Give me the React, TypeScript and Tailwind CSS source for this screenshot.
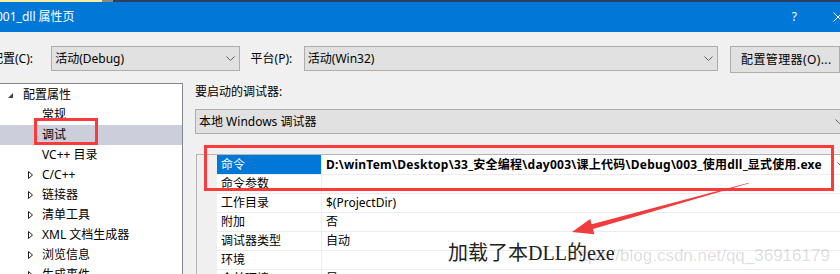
import React from "react";

type TreeItem = { label: string; level: 0 | 1; expanded?: boolean; collapsed?: boolean; selected?: boolean };
type GridRow = { name: string; value: string; bold?: boolean; selected?: boolean };

const tree: TreeItem[] = [
  { label: "配置属性", level: 0, expanded: true },
  { label: "常规", level: 1 },
  { label: "调试", level: 1, selected: true },
  { label: "VC++ 目录", level: 1 },
  { label: "C/C++", level: 1, collapsed: true },
  { label: "链接器", level: 1, collapsed: true },
  { label: "清单工具", level: 1, collapsed: true },
  { label: "XML 文档生成器", level: 1, collapsed: true },
  { label: "浏览信息", level: 1, collapsed: true },
  { label: "生成事件", level: 1, collapsed: true },
];

const rows: GridRow[] = [
  {
    name: "命令",
    value: "D:\\winTem\\Desktop\\33_安全编程\\day003\\课上代码\\Debug\\003_使用dll_显式使用.exe",
    bold: true,
    selected: true,
  },
  { name: "命令参数", value: "" },
  { name: "工作目录", value: "$(ProjectDir)" },
  { name: "附加", value: "否" },
  { name: "调试器类型", value: "自动" },
  { name: "环境", value: "" },
  { name: "合并环境", value: "是" },
];

function Chevron() {
  return (
    <svg width="9" height="5" viewBox="0 0 9 5" className="shrink-0">
      <path d="M0.5 0.5 L4.5 4.5 L8.5 0.5" fill="none" stroke="#606060" strokeWidth="1" />
    </svg>
  );
}

function Combo({ text, width }: { text: string; width: string }) {
  return (
    <div className={`${width} h-[25px] flex items-center border border-[#adadad] bg-[#e1e1e1] pl-[3px] pr-[4px]`}>
      <span className="whitespace-nowrap">{text}</span>
      <span className="ml-auto">
        <Chevron />
      </span>
    </div>
  );
}

export default function App() {
  return (
    <div className="relative w-[840px] h-[274px] overflow-hidden bg-[#f0f0f0] text-[12px] leading-[16px] text-black font-['Noto_Sans','Noto_Sans_CJK_SC',sans-serif]">
      {/* strip of the window behind */}
      <div className="flex h-[2px]">
        <div className="w-[102px] bg-[#f9eda2]" />
        <div className="w-[11px] bg-[#8d8a78]" />
        <div className="flex-1 bg-[#2b3f63]" />
      </div>

      {/* title bar */}
      <div className="flex items-center h-[30px] bg-[#0078d7] text-white">
        <span className="ml-[-4px] whitespace-nowrap">001_dll 属性页</span>
        <span className="ml-auto">?</span>
        <svg width="10" height="10" viewBox="0 0 10 10" className="ml-[36px] mr-[-3px] shrink-0">
          <path d="M0.5 0.5 L9.5 9.5 M9.5 0.5 L0.5 9.5" stroke="white" strokeWidth="1" />
        </svg>
      </div>

      {/* configuration row */}
      <div className="flex items-start mt-[14px] whitespace-nowrap">
        <span className="ml-[-9px] w-[61px] h-[25px] flex items-center">配置(C):</span>
        <Combo text="活动(Debug)" width="w-[191px]" />
        <span className="ml-[11px] w-[54px] h-[25px] flex items-center">平台(P):</span>
        <Combo text="活动(Win32)" width="w-[420px]" />
        <div className="ml-[12px] h-[27px] w-[110px] shrink-0 flex items-center border border-[#adadad] bg-[#e1e1e1] pl-[10px] tracking-[0.4px]">
          配置管理器(O)...
        </div>
      </div>

      <div className="flex mt-[10px]">
        {/* tree */}
        <div className="w-[183px] h-[200px] shrink-0 bg-white border-t border-r border-[#828790] pt-[1px]">
          {tree.map((item) => (
            <div
              key={item.label}
              className={`flex items-center h-[20px] whitespace-nowrap ${item.selected ? "bg-[#cccedb]" : ""} ${
                item.level === 0 ? "pl-[8px]" : "pl-[28px]"
              }`}
            >
              {item.level === 0 ? (
                <span className="w-[15px] flex items-center">
                  <svg width="5" height="5" viewBox="0 0 5 5">
                    <polygon points="5,0 5,5 0,5" fill="#404040" />
                  </svg>
                </span>
              ) : (
                <span className="w-[14px] flex items-center">
                  {item.collapsed && (
                    <svg width="5" height="8" viewBox="0 0 5 8">
                      <polygon points="0.5,0.5 4.5,4 0.5,7.5" fill="none" stroke="#1e1e1e" strokeWidth="1" />
                    </svg>
                  )}
                </span>
              )}
              <span>{item.label}</span>
            </div>
          ))}
        </div>

        {/* debugging page */}
        <div className="pl-[12px] pt-[1px] whitespace-nowrap">
          <div>要启动的调试器:</div>
          <div className="mt-[9px]">
            <Combo text="本地 Windows 调试器" width="w-[654px]" />
          </div>

          <div className="mt-[20px] ml-[1px] flex w-[660px] h-[200px] border-t border-l border-[#b4b4b4] bg-white">
            <div className="w-[20px] shrink-0 bg-[#f0f0f0]" />
            <div className="flex-1">
              {rows.map((row) => (
                <div
                  key={row.name}
                  className={`flex border-b border-[#ececf0] ${row.selected ? "h-[20px]" : "h-[19px]"}`}
                >
                  <div
                    className={`w-[105px] shrink-0 flex items-center pl-[4px] border-r border-[#ececf0] ${
                      row.selected ? "bg-[#0078d7] text-white" : ""
                    }`}
                  >
                    {row.name}
                  </div>
                  <div
                    className={`w-[511px] shrink-0 flex items-center pl-[4px] ${
                      row.bold ? "font-bold tracking-[0.25px]" : ""
                    }`}
                  >
                    {row.value}
                  </div>
                  {row.selected && (
                    <div className="flex-1 flex items-center pl-[3px] border-l border-[#dcdcdc]">
                      <Chevron />
                    </div>
                  )}
                </div>
              ))}
            </div>
          </div>
        </div>
      </div>

      {/* annotations drawn on top of the screenshot */}
      <div className="absolute left-[34px] top-[118px] w-[64px] h-[27px] border-[3px] border-[#fb3a3a]" />
      <div className="absolute left-[204px] top-[145px] w-[630px] h-[46px] border-[3px] border-[#fb3a3a]" />
      <svg className="absolute left-0 top-0" width="840" height="274" viewBox="0 0 840 274">
        <polygon
          points="748.9,182.7 591.6,224.2 590.2,218.9 572,232 594.4,234.3 593,229 749.1,183.3"
          fill="#f03c3c"
        />
      </svg>
      <div className="absolute left-[448px] top-[241px] text-[20px] leading-[24px] text-[#222] whitespace-nowrap font-['Liberation_Serif','Noto_Sans_CJK_SC',serif]">
        加载了本DLL的exe
      </div>
      <div className="absolute left-[569px] top-[246px] text-[17px] leading-[20px] text-black/15 whitespace-nowrap font-['Liberation_Sans',sans-serif]">
        https://blog.csdn.net/qq_36916179
      </div>
    </div>
  );
}
